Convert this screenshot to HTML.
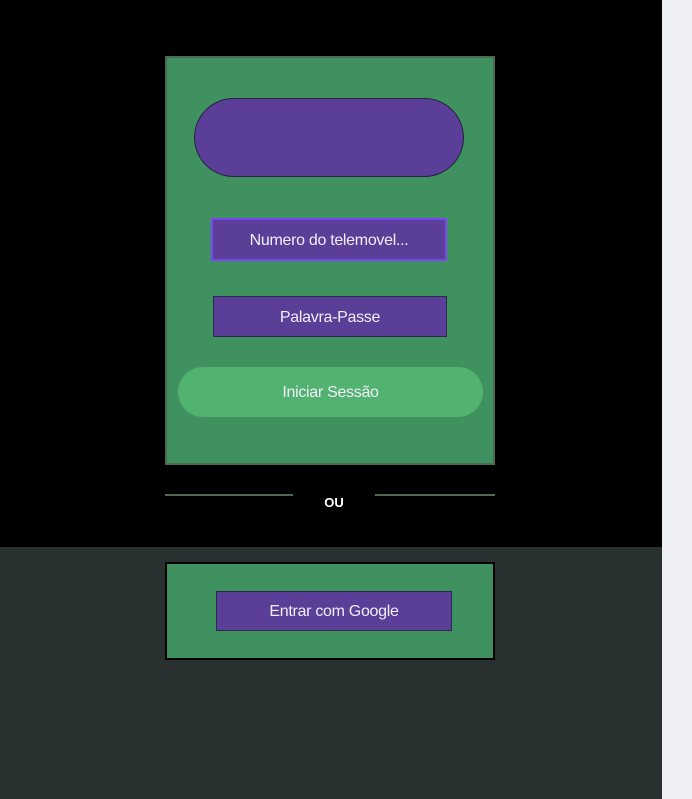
<!DOCTYPE html>
<html><head><style>
*{margin:0;padding:0;box-sizing:border-box}
body{width:692px;height:799px;position:relative;background:#283030;font-family:"Liberation Sans",sans-serif;overflow:hidden}
.top{position:absolute;left:0;top:0;width:662px;height:547px;background:#000}
.side{position:absolute;left:662px;top:0;width:30px;height:799px;background:#eef0f4}
.a{position:absolute}
.t{color:#f0eefa;font-size:16px;display:flex;align-items:center;justify-content:center;padding-top:2px;letter-spacing:-0.3px}
</style></head><body>
<div class="top"></div><div class="side"></div>
<div class="a" style="left:165px;top:56px;width:330px;height:409px;background:#3f9160;border:2px solid #4f6a52"></div>
<div class="a" style="left:194px;top:98px;width:270px;height:79px;background:#5a3e97;border:1px solid #2a2040;border-radius:40px"></div>
<div class="a t" style="left:211px;top:218px;width:236px;height:43px;background:#5a3e97;border:2px solid #7b45f5">Numero do telemovel...</div>
<div class="a t" style="left:213px;top:296px;width:234px;height:41px;background:#5a3e97;border:1px solid #2a2a50">Palavra-Passe</div>
<div class="a t" style="left:178px;top:367px;width:305px;height:50px;background:#52b26f;border-radius:25px">Iniciar Sessão</div>
<div class="a" style="left:165px;top:494px;width:128px;height:2px;background:#4f6a52"></div>
<div class="a" style="left:375px;top:494px;width:120px;height:2px;background:#4f6a52"></div>
<div class="a" style="left:314px;top:495px;width:40px;text-align:center;color:#fff;font-weight:bold;font-size:13px">OU</div>
<div class="a" style="left:165px;top:562px;width:330px;height:98px;background:#3f9160;border:2px solid #000"></div>
<div class="a t" style="left:216px;top:591px;width:236px;height:40px;background:#5a3e97;border:1px solid #2a2a50">Entrar com Google</div>
</body></html>
